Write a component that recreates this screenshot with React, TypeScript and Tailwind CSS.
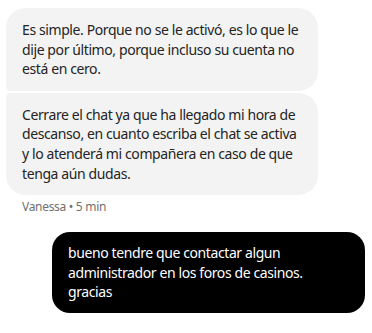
const messages = [
  {
    text: "Es simple. Porque no se le activó, es lo que le dije por último, porque incluso su cuenta no está en cero.",
    shape: "rounded-[20px] rounded-bl-[4px]",
  },
  {
    text: "Cerrare el chat ya que ha llegado mi hora de descanso, en cuanto escriba el chat se activa y lo atenderá mi compañera en caso de que tenga aún dudas.",
    shape: "rounded-[20px] rounded-tl-[4px]",
  },
]

export default function App() {
  return (
    <div
      className="w-[372px] h-[333px] bg-white pl-[6px] pr-[7px] pt-2"
      style={{ fontFamily: '"Noto Sans", "Open Sans", sans-serif' }}
    >
      <div className="flex flex-col gap-[2px]">
        {messages.map((m, i) => (
          <div
            key={i}
            className={`w-[312px] bg-[#f3f3f3] px-4 py-3 text-[14px] leading-[1.4] tracking-[-0.4px] text-[#242424] ${m.shape}`}
          >
            {m.text}
          </div>
        ))}
      </div>
      <div className="pl-4 pt-[4px] text-[12px] leading-4 tracking-[-0.3px] text-[#707070]">Vanessa • 5 min</div>

      <div className="flex justify-end mt-[17px]">
        <div className="w-[313px] bg-black rounded-[18px] px-4 py-[11px] text-[14px] leading-[1.4] tracking-[-0.4px] text-white">
          bueno tendre que contactar algun administrador en los foros de casinos. gracias
        </div>
      </div>
    </div>
  )
}
